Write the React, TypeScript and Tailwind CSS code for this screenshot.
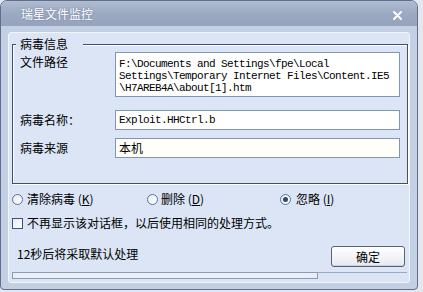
import React from "react";

const cjk = "font-['Noto_Sans_CJK_SC','Noto_Sans',sans-serif]";
const mono = "font-['Liberation_Mono','DejaVu_Sans_Mono',monospace]";

function Radio({ checked }: { checked?: boolean }) {
  return (
    <div className="w-[11px] h-[11px] rounded-full border border-[#5a7397] bg-gradient-to-br from-[#e6eaf0] to-[#ffffff] flex items-center justify-center shrink-0">
      {checked && <div className="w-[5px] h-[5px] rounded-full bg-[#33496b]" />}
    </div>
  );
}

export default function App() {
  return (
    <div className={`w-[423px] h-[292px] bg-[#e4e7ee] overflow-hidden ${cjk}`}>
      <div className="w-[418px] h-[290px] rounded-t-[7px] rounded-b-[4px] border border-[#5f6f8d] bg-[#c3d0e4] flex flex-col overflow-hidden">
        {/* title bar */}
        <div className="h-[25px] bg-gradient-to-b from-[#b0bcd0] via-[#9ba9c2] to-[#95a3bd] flex items-center pl-[20px] pr-[15px] shrink-0">
          <span className="text-white text-[12px] leading-[13px] [text-shadow:0_0_2px_#6b7a96]">瑞星文件监控</span>
          <div className="flex-1" />
          <svg width="9" height="9" viewBox="0 0 9 9" className="mt-[3px]">
            <path d="M1 1L8 8M8 1L1 8" stroke="#ffffff" strokeWidth="2" strokeLinecap="round" />
          </svg>
        </div>
        {/* frame */}
        <div className="flex-1 px-[7px] pt-[6px] pb-[6px]">
          <div className="h-full bg-[#dbe5f5] rounded-[3px] border border-[#f2f6fc] flex flex-col">
            {/* groupbox */}
            <div className="relative mt-[11px] ml-[3px] mr-[1px] h-[140px] border border-[#3f4f6d] shadow-[inset_1px_1px_0_#ffffff,1px_1px_0_#ffffff] pt-[7px] pl-[7px] pr-[7px]">
              <div className="absolute left-[3px] top-[-8px] bg-[#dbe5f5] pl-[4px] pr-[15px] text-[12px] leading-[14px] text-black">
                病毒信息
              </div>
              <div className="grid grid-cols-[95px_1fr] text-[12px] text-black">
                <div className="pt-[3px] leading-[14px]">文件路径</div>
                <div className={`h-[45px] border border-[#7f96b4] bg-white pl-[3px] pt-[5px] text-[11px] leading-[12px] tracking-[-0.6px] whitespace-pre ${mono}`}>
                  {"F:\\Documents and Settings\\fpe\\Local\nSettings\\Temporary Internet Files\\Content.IE5\n\\H7AREB4A\\about[1].htm"}
                </div>
                <div className="mt-[13px] h-[20px] flex items-center leading-[14px]">病毒名称：</div>
                <div className={`mt-[13px] h-[20px] border border-[#7f96b4] bg-white pl-[3px] flex items-center text-[11px] tracking-[-0.6px] ${mono}`}>
                  Exploit.HHCtrl.b
                </div>
                <div className="mt-[8px] h-[20px] flex items-center leading-[14px]">病毒来源</div>
                <div className="mt-[8px] h-[20px] border border-[#7f96b4] bg-[#fffef8] pl-[3px] flex items-center text-[12px] leading-[14px]">
                  本机
                </div>
              </div>
            </div>
            {/* radios */}
            <div className="mt-[7px] ml-[3px] h-[16px] flex items-center text-[12px] leading-[14px] text-black">
              <div className="w-[135px] flex items-center gap-[4px]">
                <Radio />
                <span>清除病毒 (<u>K</u>)</span>
              </div>
              <div className="w-[133px] flex items-center gap-[3px]">
                <Radio />
                <span>删除 (<u>D</u>)</span>
              </div>
              <div className="flex items-center gap-[5px]">
                <Radio checked />
                <span>忽略 (<u>I</u>)</span>
              </div>
            </div>
            {/* checkbox */}
            <div className="mt-[8px] ml-[3px] h-[16px] flex items-center gap-[4px] text-[12px] leading-[14px] text-black">
              <div className="w-[11px] h-[11px] border border-[#3b5478] bg-gradient-to-br from-[#e8ebf0] to-white shrink-0" />
              <span>不再显示该对话框，以后使用相同的处理方式。</span>
            </div>
            {/* status + button */}
            <div className="mt-[15px] flex items-start">
              <div className="ml-[8px] text-[12px] leading-[16px] text-black">12秒后将采取默认处理</div>
              <div className="flex-1" />
              <button className="mr-[4px] w-[74px] h-[21px] rounded-[3px] border border-[#5c6470] bg-gradient-to-b from-white to-[#e6eaf1] text-[12px] leading-[14px] text-black shadow-[inset_0_-1px_0_#c6cdd8]">
                确定
              </button>
            </div>
            {/* progress */}
            <div className="mt-[5px] ml-[3px] mr-[2px] h-[7px] flex">
              <div className="w-[306px] h-[7px] border border-[#8d9cb6] bg-[#e9eef7]" />
              <div className="flex-1 border-t border-[#9aa8c0]" />
            </div>
          </div>
        </div>
      </div>
    </div>
  );
}
